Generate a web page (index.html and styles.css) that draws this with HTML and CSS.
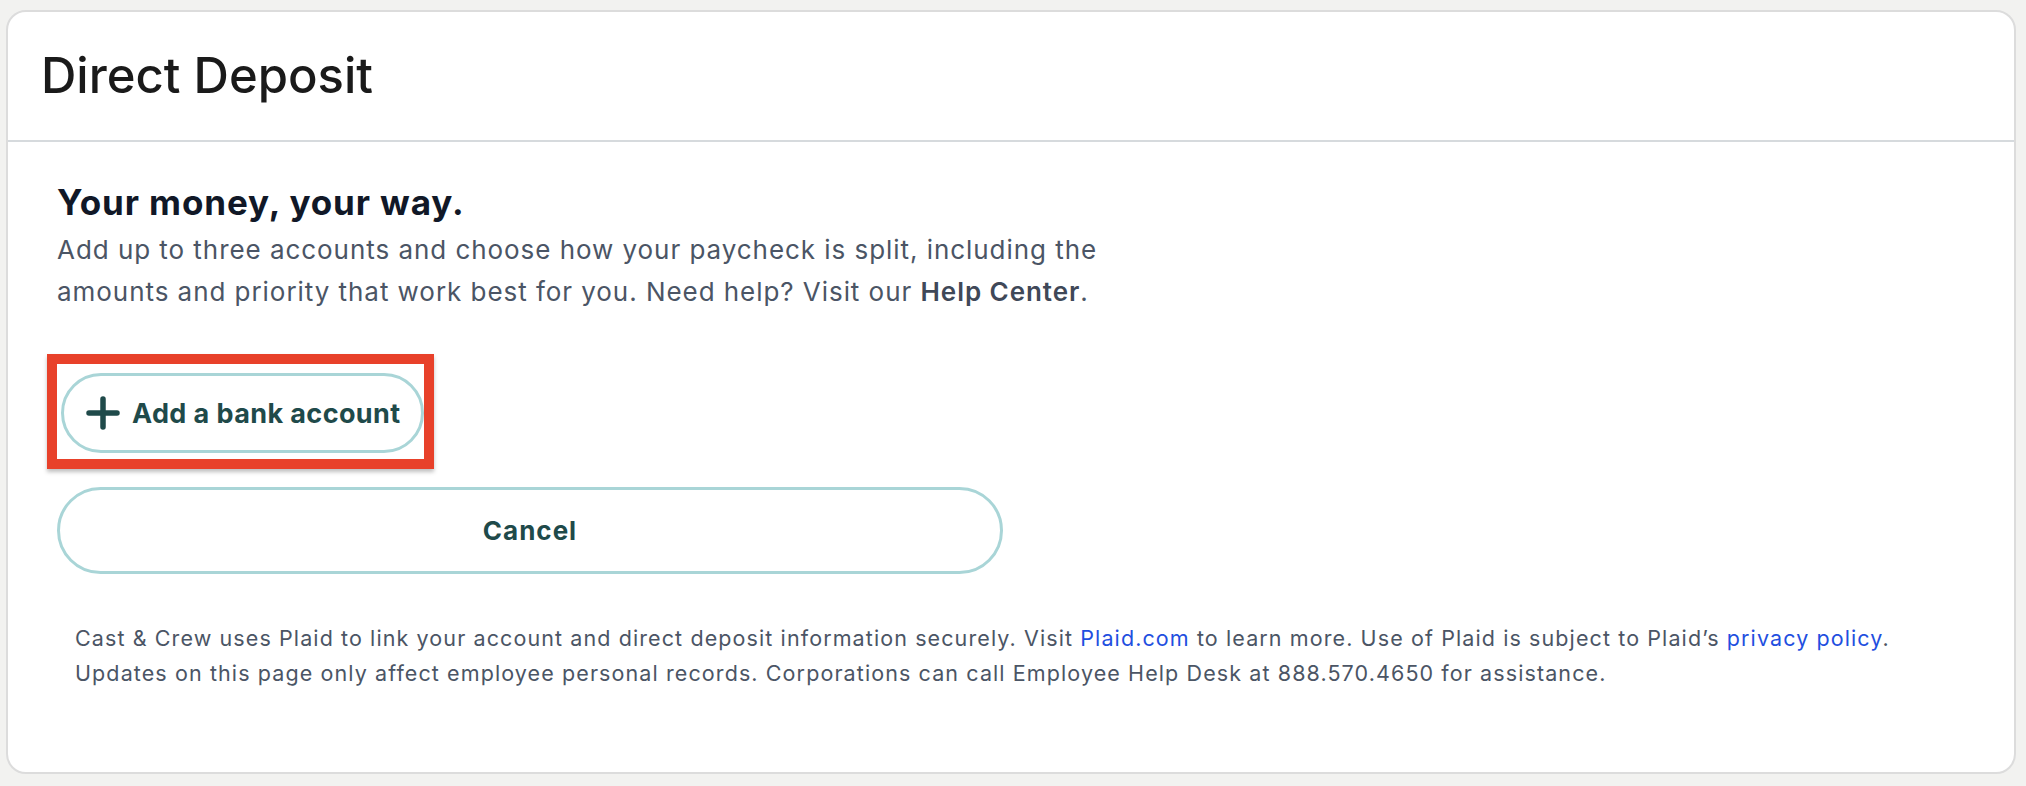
FILE: index.html
```html
<!DOCTYPE html>
<html lang="en">
<head>
<meta charset="utf-8">
<title>Direct Deposit</title>
<link rel="stylesheet" href="styles.css">
</head>
<body>
<main class="card">
  <header class="card-header">
    <h1 class="title">Direct Deposit</h1>
  </header>
  <section class="card-body">
    <h2 class="lead">Your money, your way.</h2>
    <p class="intro">Add up to three accounts and choose how your paycheck is split, including the amounts and priority that work best for you. Need help? Visit our <strong>Help Center</strong>.</p>
    <div class="actions">
      <div class="add-wrap">
        <button class="btn btn-add" type="button">
          <svg class="plus" width="34" height="34" viewBox="0 0 34 34" aria-hidden="true"><path d="M17 3V31M3 17H31" stroke="#1f4a4a" stroke-width="5.5" stroke-linecap="round" fill="none"/></svg>
          <span>Add a bank account</span>
        </button>
        <span class="highlight" aria-hidden="true"></span>
      </div>
      <button class="btn btn-cancel" type="button">Cancel</button>
    </div>
    <p class="footnote">Cast &amp; Crew uses Plaid to link your account and direct deposit information securely. Visit <a href="#">Plaid.com</a> to learn more. Use of Plaid is subject to Plaid’s <a href="#">privacy policy</a>.<br>Updates on this page only affect employee personal records. Corporations can call Employee Help Desk at 888.570.4650 for assistance.</p>
  </section>
</main>
</body>
</html>
```
FILE: styles.css
```css
* { box-sizing: border-box; }
html, body { margin: 0; }
body {
  background: #f2f2f0;
  padding: 10px 10px 12px 6px;
  font-family: Inter, "Liberation Sans", sans-serif;
  height: 786px;
}
.card {
  background: #fff;
  border: 2px solid #dcdcdc;
  border-radius: 20px;
  height: 764px;
  display: flex;
  flex-direction: column;
}
.card-header {
  height: 130px;
  display: flex;
  align-items: center;
  padding-left: 33px;
  border-bottom: 2px solid #d6dadd;
}
.title {
  margin: 0;
  font-size: 49px;
  font-weight: 500;
  letter-spacing: 0;
  color: #1a1a1a;
  line-height: 56px;
}
.card-body {
  padding: 40px 50px 0 49px;
}
.lead {
  margin: 0;
  font-size: 35px;
  line-height: 40px;
  font-weight: 700;
  color: #111827;
  letter-spacing: 0.9px;
}
.intro {
  margin: 7px 0 0;
  max-width: 1100px;
  font-size: 26px;
  line-height: 41.5px;
  letter-spacing: 0.95px;
  color: #4b5565;
}
.intro strong { font-weight: 600; color: #3f4858; }
.actions {
  margin-top: 61px;
  display: flex;
  flex-direction: column;
  align-items: flex-start;
  gap: 34px;
}
.add-wrap {
  position: relative;
  margin-left: 4px;
}
.btn {
  background: #fff;
  border: 3.5px solid #a9d5d7;
  border-radius: 999px;
  color: #1f4a4a;
  font-family: Inter, "Liberation Sans", sans-serif;
  font-weight: 700;
  cursor: pointer;
}
.btn-add {
  height: 80px;
  width: 363px;
  display: flex;
  align-items: center;
  gap: 12px;
  padding: 0 0 0 22px;
  font-size: 27px;
  letter-spacing: 0.4px;
}
.plus { flex: none; }
.btn-cancel {
  width: 946px;
  height: 87px;
  font-size: 26px;
  letter-spacing: 1px;
}
.highlight {
  position: absolute;
  left: -14px;
  top: -19px;
  right: -10px;
  bottom: -16px;
  border: 10px solid #e8412a;
  box-shadow: 0 3px 4px rgba(0,0,0,0.25);
  pointer-events: none;
}
.footnote {
  margin: 47px 0 0 18px;
  font-size: 21.5px;
  line-height: 35px;
  letter-spacing: 1.1px;
  color: #4b5565;
}
.footnote a { color: #1f4fe0; text-decoration: none; }
```
